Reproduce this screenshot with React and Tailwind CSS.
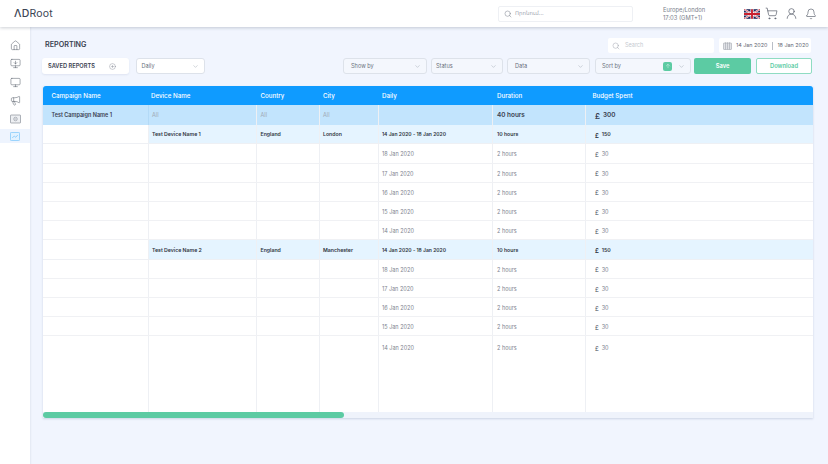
import React from "react";
import {
  Home,
  MonitorDown,
  Monitor,
  Megaphone,
  Search,
  ShoppingCart,
  UserRound,
  Bell,
  ChevronDown,
  PlusCircle,
  ArrowUp,
} from "lucide-react";

const font = "font-['Inter','Noto_Sans','DejaVu_Sans',sans-serif]";

// table columns, from the reference
const cols = "grid grid-cols-[105.5px_108.5px_62.5px_59px_114px_93.5px_1fr]";

const days = ["18 Jan 2020", "17 Jan 2020", "16 Jan 2020", "15 Jan 2020", "14 Jan 2020"];

const Flag = () => (
  <svg width="16" height="10" viewBox="0 0 60 36" className="block">
    <rect width="60" height="36" fill="#1f2a5e" />
    <path d="M0 0L60 36M60 0L0 36" stroke="#fff" strokeWidth="7" />
    <path d="M0 0L60 36M60 0L0 36" stroke="#c8202f" strokeWidth="2.5" />
    <path d="M30 0V36M0 18H60" stroke="#fff" strokeWidth="12" />
    <path d="M30 0V36M0 18H60" stroke="#c8202f" strokeWidth="7" />
  </svg>
);

const ScreenIcon = () => (
  <svg width="11" height="10" viewBox="0 0 22 20" fill="none" stroke="#7b818c" strokeWidth="1.2">
    <rect x="1" y="2" width="20" height="16" rx="1" fill="#eef0f3" />
    <circle cx="11" cy="10" r="3.6" strokeWidth="1" />
    <path d="M9.6 8.6l2.8 2.8M12.4 8.6l-2.8 2.8" strokeWidth="0.8" />
  </svg>
);

const ReportIcon = () => (
  <svg width="10" height="9" viewBox="0 0 20 18" fill="none">
    <rect x="0.8" y="0.8" width="18.4" height="16.4" rx="2" fill="#e2f2ff" stroke="#7cc6fb" strokeWidth="1.6" />
    <path d="M4.5 12l4-4 3 2.5 4-4.5" stroke="#5fb8fa" strokeWidth="1.2" />
  </svg>
);

const CalendarIcon = () => (
  <svg width="9" height="8" viewBox="0 0 18 16" fill="none" stroke="#9da2ab" strokeWidth="1.1">
    <rect x="1" y="2" width="16" height="13" rx="1" fill="#e1e3e7" />
    <path d="M5 0.5V15M9 0.5V15M13 0.5V15" />
  </svg>
);

const Select = ({ label, className }) => (
  <div
    className={`flex h-[16px] items-center justify-between rounded-[3px] border border-[#dde2ea] bg-[#f4f7fd] pr-[5px] text-[5.6px] text-[#6b7280] ${className}`}
  >
    <span>{label}</span>
    <ChevronDown size={7} strokeWidth={1.5} className="text-[#9aa3af]" />
  </div>
);

const Cell = ({ children, className = "", pad = "pt-[1px]" }) => (
  <div className={`flex items-center border-r border-[#eef0f4] pl-[3.5px] last:border-r-0 ${pad} ${className}`}>
    {children}
  </div>
);

const DeviceRow = ({ name, city }) => (
  <div className={`${cols} h-[19.4px] border-b border-[#eef0f4] text-[5.2px] font-semibold text-[#2f3542]`}>
    <Cell className="bg-white" />
    <Cell className="bg-[#e5f4ff]" pad="pt-[2px]">{name}</Cell>
    <Cell className="bg-[#e5f4ff]" pad="pt-[2px]">England</Cell>
    <Cell className="bg-[#e5f4ff]" pad="pt-[2px]">{city}</Cell>
    <Cell className="bg-[#e5f4ff] text-[5px]" pad="pt-[2px]">14 Jan 2020 - 18 Jan 2020</Cell>
    <Cell className="bg-[#e5f4ff] pl-[4.5px]" pad="pt-[2px]">10 hours</Cell>
    <Cell className="bg-[#e5f4ff] pl-[9px]" pad="pt-[2px]">
      <span className="text-[6px]">£</span>
      <span className="ml-[3px]">150</span>
    </Cell>
  </div>
);

const DayRow = ({ day, last }) => {
  const pad = last ? "pt-[8px]" : "pt-[2px]";
  return (
    <div
      className={`${cols} text-[5.5px] text-[#7d838e] ${last ? "h-[76px]" : "h-[19.2px] border-b border-[#f0f1f4]"}`}
    >
      <Cell />
      <Cell />
      <Cell />
      <Cell />
      <Cell pad={pad} className={last ? "items-start" : ""}>{day}</Cell>
      <Cell pad={pad} className={last ? "items-start pl-[4.5px]" : "pl-[4.5px]"}>2 hours</Cell>
      <Cell pad={pad} className={last ? "items-start pl-[9px]" : "pl-[9px]"}>
        <span className="text-[6px] text-[#4b5260]">£</span>
        <span className="ml-[3px]">30</span>
      </Cell>
    </div>
  );
};

const App = () => {
  return (
    <div className={`flex h-[464px] w-[828px] flex-col overflow-hidden bg-[#f1f5fe] ${font}`}>
      <header className="relative z-10 flex h-[27px] shrink-0 items-center bg-white shadow-[0_1px_3px_rgba(60,70,90,0.25)]">
        <div className="ml-[14px] w-[484px] text-[10.5px] tracking-[0.2px] text-[#3c4454]">
          <span className="font-medium">ΛD</span>Root
        </div>
        <div className="flex h-[16px] w-[135px] items-center rounded-[2px] border border-[#eef0f4] pl-[5px] text-[5.5px] text-[#a0a6b0]">
          <Search size={8} strokeWidth={1.5} className="mr-[3px] text-[#7a808c]" />
          Որոնում...
        </div>
        <div className="ml-[30px] w-[81px] text-[5.8px] leading-[8px] text-[#7a808c]">
          <div>Europe/London</div>
          <div>17:03 (GMT+1)</div>
        </div>
        <Flag />
        <ShoppingCart size={13} strokeWidth={1.2} className="ml-[5px] text-[#4a515e]" />
        <UserRound size={13} strokeWidth={1.2} className="ml-[7px] text-[#4a515e]" />
        <Bell size={12} strokeWidth={1.2} className="ml-[7px] text-[#4a515e]" />
      </header>

      <div className="flex flex-1">
        <aside className="flex w-[30px] shrink-0 flex-col items-center gap-[7.5px] bg-white pt-[12.5px] text-[#5d6470] shadow-[1px_0_0_#e6ebf5,2px_0_0_#eef2fb]">
          <Home size={11} strokeWidth={1.2} />
          <MonitorDown size={11} strokeWidth={1.2} />
          <Monitor size={11} strokeWidth={1.2} />
          <Megaphone size={11} strokeWidth={1.2} />
          <ScreenIcon />
          <div className="mt-[-2px] flex h-[14px] w-full items-center justify-center bg-[#eef4fe]">
            <ReportIcon />
          </div>
        </aside>

        <main className="flex-1 pl-[13px] pr-[15px]">
          <div className="flex h-[32px] justify-between">
            <h1 className="ml-[2px] mt-[13px] text-[7.2px] font-semibold text-[#3a4150]">REPORTING</h1>
            <div className="mr-[2px] mt-[11px] flex h-[15px] items-center gap-[5px]">
              <div className="flex h-[15px] w-[106px] items-center rounded-[2px] bg-white pl-[4px] text-[5.5px] text-[#c5c9d0]">
                <Search size={8} strokeWidth={1.2} className="mr-[5px] text-[#8b919c]" />
                Search
              </div>
              <div className="flex h-[15px] w-[92px] items-center rounded-[2px] bg-white pl-[4px] text-[5.4px] text-[#5f6673]">
                <span className="mr-[4px]">
                  <CalendarIcon />
                </span>
                14 Jan 2020
                <span className="mx-[4.5px] h-[8px] w-px bg-[#b9bec7]" />
                18 Jan 2020
              </div>
            </div>
          </div>

          <div className="-ml-[1px] mt-[-1px] flex h-[16px] items-center">
            <div className="flex h-[16px] w-[87px] items-center justify-between rounded-[3px] bg-white pl-[6px] pr-[13px] text-[5.7px] font-semibold text-[#3a4150] shadow-[0_1px_2px_rgba(90,110,150,0.12)]">
              SAVED REPORTS
              <PlusCircle size={7} strokeWidth={1.2} className="text-[#6b7280]" />
            </div>
            <Select label="Daily" className="ml-[7px] w-[69px] bg-white pl-[4.5px]" />
            <Select label="Show by" className="ml-[138px] w-[84px] pl-[7px]" />
            <Select label="Status" className="ml-[4px] w-[72px] pl-[4px]" />
            <Select label="Data" className="ml-[4px] w-[83px] pl-[7px]" />
            <div className="ml-[5px] flex h-[16px] w-[96px] items-center rounded-[3px] border border-[#dde2ea] bg-[#f4f7fd] pl-[6px] pr-[5px] text-[5.6px] text-[#6b7280]">
              <span className="flex-1">Sort by</span>
              <span className="flex h-[9px] w-[9px] items-center justify-center rounded-[2px] bg-[#5ccba3]">
                <ArrowUp size={6} strokeWidth={1.5} className="text-white" />
              </span>
              <ChevronDown size={7} strokeWidth={1.5} className="ml-[6px] text-[#9aa3af]" />
            </div>
            <button className="ml-[3px] h-[16px] w-[57px] rounded-[2px] bg-[#5ccba3] text-[5.8px] font-semibold text-white">
              Save
            </button>
            <button className="ml-[5px] h-[16px] w-[56px] rounded-[2px] border border-[#8fdcc2] bg-white text-[5.8px] font-semibold text-[#5ccba3]">
              Download
            </button>
          </div>

          <div className="mt-[12px] w-[770px] shadow-[0_1px_2px_rgba(90,110,150,0.25)]">
            <div className={`${cols} h-[19px] rounded-t-[3px] bg-[#0f9bff] text-[6.2px] font-medium text-white`}>
              <div className="flex items-center pl-[8.5px] pt-[1px]">Campaign Name</div>
              <div className="flex items-center pl-[2.5px] pt-[1px]">Device Name</div>
              <div className="flex items-center pl-[3.5px] pt-[1px]">Country</div>
              <div className="flex items-center pl-[3.5px] pt-[1px]">City</div>
              <div className="flex items-center pl-[3.5px] pt-[1px]">Daily</div>
              <div className="flex items-center pl-[4.5px] pt-[1px]">Duration</div>
              <div className="flex items-center pl-[6.5px] pt-[1px]">Budget Spent</div>
            </div>

            <div className={`${cols} h-[20px] bg-[#c2e4fd] text-[5.5px] text-[#a0a8b3]`}>
              <div className="flex items-center border-r border-[#b3daf7] pl-[8.5px] pt-[1px] font-semibold text-[#3a4150]">
                Test Campaign Name 1
              </div>
              <Cell className="border-[#b3daf7]">All</Cell>
              <Cell className="border-[#b3daf7]">All</Cell>
              <Cell className="border-[#b3daf7]">All</Cell>
              <Cell className="border-[#b3daf7]" />
              <Cell className="border-[#b3daf7] pl-[4.5px] text-[6.4px] font-semibold text-[#3a4150]">40 hours</Cell>
              <Cell className="pl-[9px] text-[6.4px] font-semibold text-[#3a4150]">
                <span className="text-[8px]">£</span>
                <span className="ml-[3px]">300</span>
              </Cell>
            </div>

            <div className="bg-white">
              <DeviceRow name="Test Device Name 1" city="London" />
              {days.map((d) => (
                <DayRow key={d} day={d} />
              ))}
              <DeviceRow name="Test Device Name 2" city="Manchester" />
              {days.map((d, i) => (
                <DayRow key={d} day={d} last={i === 4} />
              ))}
            </div>

            <div className="h-[6px] bg-[#eff3fb]">
              <div className="h-[6px] w-[301px] rounded-full bg-[#5ccba3]" />
            </div>
          </div>
        </main>
      </div>
    </div>
  );
};

export default App;
